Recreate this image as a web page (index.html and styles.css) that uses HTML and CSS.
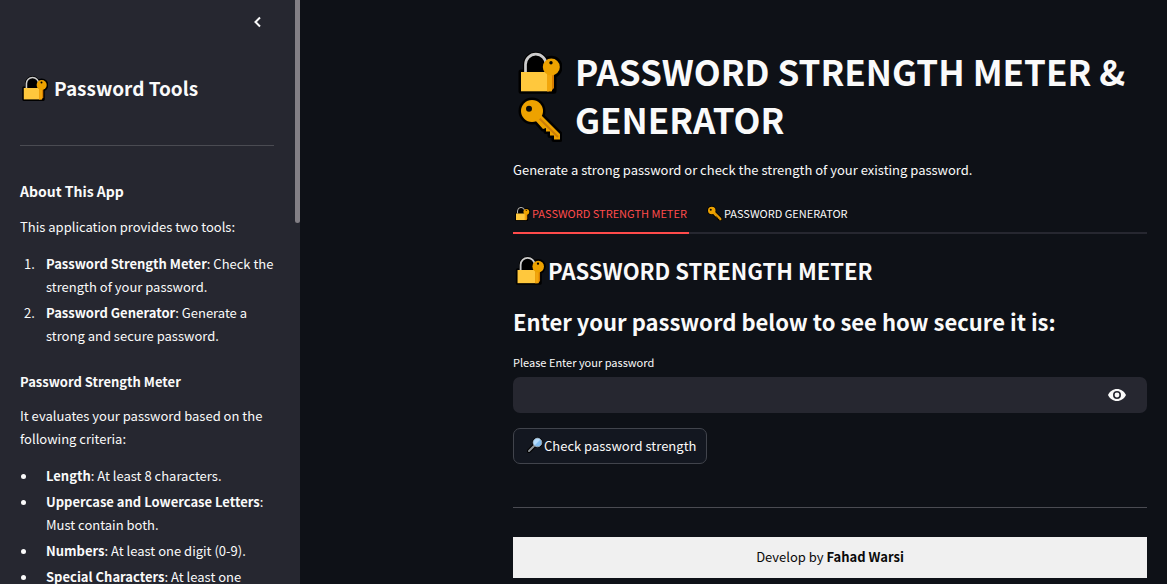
FILE: index.html
```html
<!DOCTYPE html>
<html lang="en">
<head>
<meta charset="utf-8">
<title>Password Strength Meter &amp; Generator</title>
<meta name="viewport" content="width=device-width, initial-scale=1">
<link rel="stylesheet" href="styles.css">
</head>
<body>
<svg class="sprite" aria-hidden="true">
  <symbol id="lock" viewBox="0 0 44 44">
    <path d="M7.500 22V14.500a10.300 10.300 0 0 1 20.600 0V22M3 22H36V41.300H3ZM33.300 8.300a8.700 8.700 0 1 1 0 17.400a8.700 8.700 0 1 1 0-17.400" fill="#000" stroke="#000" stroke-width="5" stroke-linejoin="round"/>
    <path d="M7.500 22V14.500a10.300 10.300 0 0 1 20.600 0V22" fill="#000" stroke="#ccc" stroke-width="2.700"/>
    <path d="M3 22H31V41.300H3Z" fill="#ffc83d"/>
    <path d="M29 23H36V38L33 41.300H29Z" fill="#d67d00"/>
    <path d="M29 23H34V41.300H29Z" fill="#f2a60c"/>
    <circle cx="33.300" cy="17" r="8.500" fill="#eda200"/>
    <circle cx="33" cy="12.700" r="1.700" fill="#000"/>
  </symbol>
  <symbol id="key" viewBox="0 0 44 44">
    <g stroke="#000" stroke-width="5" stroke-linejoin="round">
      <circle cx="14" cy="13" r="11"/>
      <path d="M17 22L23 17L42 36V41.500H36V37.500H32V33.500H28V30L25 31Z"/>
    </g>
    <path d="M17 22L23 17L42 36V41.500H36V37.500H32V33.500H28V30L25 31Z" fill="#eda200"/>
    <path d="M21 20L40 39" stroke="#cc7d08" stroke-width="2"/>
    <circle cx="14" cy="13" r="11" fill="#eda200"/>
    <circle cx="11" cy="10.700" r="3" fill="#0a0a0a"/>
  </symbol>
  <symbol id="lens" viewBox="0 0 16 16">
    <path d="M2 14L7 9" stroke="#000" stroke-width="4" stroke-linecap="round"/>
    <circle cx="10.500" cy="5.500" r="5.300" fill="#000"/>
    <path d="M2 14L7 9" stroke="#8d9296" stroke-width="2" stroke-linecap="round"/>
    <circle cx="10.500" cy="5.500" r="4.300" fill="#83bdf0" stroke="#9ba9b4" stroke-width="1"/>
    <path d="M7.800 8.200A3.800 3.800 0 0 1 13.200 2.800Z" fill="#b6dcfb"/>
  </symbol>
</svg>
<div class="app">
  <aside class="sidebar">
    <div class="sidebar-top">
      <button class="icon-button" type="button" aria-label="Collapse sidebar">
        <svg class="chevron" viewBox="0 0 12 12"><path d="M8 1.500L3.500 6L8 10.500" fill="none" stroke="#fafafa" stroke-width="2"/></svg>
      </button>
    </div>
    <h2 class="brand"><svg class="icon"><use href="#lock"/></svg>Password Tools</h2>
    <hr class="rule">
    <h3 class="section-title">About This App</h3>
    <p class="text">This application provides two tools:</p>
    <ol class="list">
      <li><strong>Password Strength Meter</strong>: Check the strength of your password.</li>
      <li><strong>Password Generator</strong>: Generate a strong and secure password.</li>
    </ol>
    <h4 class="sub-title">Password Strength Meter</h4>
    <p class="text">It evaluates your password based on the following criteria:</p>
    <ul class="list">
      <li><strong>Length</strong>: At least 8 characters.</li>
      <li><strong>Uppercase and Lowercase Letters</strong>: Must contain both.</li>
      <li><strong>Numbers</strong>: At least one digit (0-9).</li>
      <li><strong>Special Characters</strong>: At least one</li>
    </ul>
    <div class="scroll-thumb"></div>
  </aside>
  <main class="main">
    <div class="content">
      <h1 class="title">
        <span class="title-icons"><svg class="icon"><use href="#lock"/></svg><svg class="icon"><use href="#key"/></svg></span>
        <span>PASSWORD STRENGTH METER &amp; GENERATOR</span>
      </h1>
      <p class="text">Generate a strong password or check the strength of your existing password.</p>
      <div class="tabs" role="tablist">
        <button class="tab tab-active" type="button" role="tab" aria-selected="true"><svg class="icon"><use href="#lock"/></svg>PASSWORD STRENGTH METER</button>
        <button class="tab" type="button" role="tab" aria-selected="false"><svg class="icon"><use href="#key"/></svg>PASSWORD GENERATOR</button>
      </div>
      <h2 class="heading"><svg class="icon"><use href="#lock"/></svg>PASSWORD STRENGTH METER</h2>
      <h2 class="heading">Enter your password below to see how secure it is:</h2>
      <form class="form">
        <label class="label" for="password">Please Enter your password</label>
        <div class="field">
          <input class="input" id="password" type="password" autocomplete="off">
          <button class="icon-button" type="button" aria-label="Show password">
            <svg class="eye" viewBox="0 0 18 18"><path fill="#fafafa" fill-rule="evenodd" d="M9 3C5 3 1.700 5.400 0 9c1.700 3.600 5 6 9 6s7.300-2.400 9-6c-1.700-3.600-5-6-9-6Zm0 10a4 4 0 1 1 0-8a4 4 0 0 1 0 8Zm0-1.600a2.400 2.400 0 1 0 0-4.800a2.400 2.400 0 0 0 0 4.800Z"/></svg>
          </button>
        </div>
        <button class="submit" type="button"><svg class="icon"><use href="#lens"/></svg>Check password strength</button>
      </form>
      <hr class="rule">
      <footer class="footer">Develop by <strong>Fahad Warsi</strong></footer>
    </div>
  </main>
</div>
</body>
</html>
```
FILE: styles.css
```css
* { box-sizing: border-box; }
body {
  margin: 0;
  background: #0e1117;
  color: #fafafa;
  font: 13px/23px "Noto Sans CJK SC", "Noto Sans", sans-serif;
}
h1, h2, h3, h4, p, ol, ul { margin: 0; }
button, input { font: inherit; color: inherit; border: 0; background: none; padding: 0; }
.sprite { position: absolute; width: 0; height: 0; }
.icon { flex: none; display: block; }
.app { display: flex; height: 100vh; overflow: hidden; }

.sidebar {
  position: relative;
  flex: none;
  width: 300px;
  padding: 0 26px 0 20px;
  overflow: hidden;
  background: #262730;
}
.sidebar-top { display: flex; justify-content: flex-end; padding: 12px 6px 0 0; }
.icon-button { display: grid; place-items: center; width: 20px; height: 20px; cursor: pointer; }
.chevron { width: 12px; height: 12px; }
.brand {
  display: flex;
  align-items: center;
  gap: 6px;
  margin-top: 43px;
  padding-left: 2px;
  font-size: 19px;
  line-height: 26px;
  font-weight: 700;
}
.brand .icon { width: 26px; height: 26px; }
.rule { height: 1px; margin: 0; border: 0; background: #4a4b52; }
.sidebar .rule { margin: 44px 0 34px; }
.section-title { margin-bottom: 13px; font-size: 14px; line-height: 22px; font-weight: 700; }
.sub-title { margin: 26px 0 13px; font-size: 13px; line-height: 18px; }
.list { margin-top: 14px; padding-left: 26px; list-style: none; counter-reset: item; }
.list li { margin-bottom: 3px; counter-increment: item; }
.list li::before { float: left; }
ol.list li::before { content: counter(item) "."; margin-left: -22px; }
ul.list li::before {
  content: "";
  width: 5px;
  height: 5px;
  margin: 10px 0 0 -25px;
  border-radius: 50%;
  background: #fafafa;
}
.scroll-thumb {
  position: absolute;
  top: 0;
  right: 0;
  width: 5px;
  height: 223px;
  border-radius: 0 0 3px 3px;
  background: #827f85;
}

.main { flex: 1; display: flex; justify-content: flex-end; min-width: 0; padding: 47px 20px 0; }
.content { flex: 1; max-width: 634px; min-width: 0; }
.title {
  display: flex;
  gap: 13px;
  margin-bottom: 15px;
  font-size: 35px;
  line-height: 48px;
}
.title-icons { display: grid; padding: 1px 0 0 5px; height: 97px; margin-bottom: -1px; }
.title-icons .icon { width: 44px; height: 48px; }
.tabs { display: flex; gap: 16px; margin: 15px 0 21px; border-bottom: 2px solid #262730; }
.tab {
  display: flex;
  align-items: center;
  gap: 2px;
  height: 38px;
  margin-bottom: -2px;
  padding: 0 2px 2px;
  border-bottom: 2px solid transparent;
  font-size: 11px;
  cursor: pointer;
}
.tab .icon { width: 15px; height: 15px; }
.tab-active { color: #ff4b4b; border-color: #ff4b4b; }
.heading {
  display: flex;
  align-items: center;
  gap: 2px;
  margin-bottom: 21px;
  font-size: 22px;
  line-height: 30px;
  font-weight: 700;
}
.heading .icon { width: 31px; height: 30px; margin-left: 2px; }
.form { display: grid; justify-items: start; margin-bottom: 43px; }
.label { margin-top: -5px; padding-bottom: 5px; font-size: 11px; line-height: 20px; }
.field {
  display: flex;
  align-items: center;
  width: 100%;
  height: 36px;
  margin-bottom: 15px;
  padding-right: 20px;
  border-radius: 7px;
  background: #262730;
}
.input { flex: 1; min-width: 0; height: 36px; padding: 0 12px; outline: 0; }
.eye { width: 18px; height: 18px; }
.submit {
  display: flex;
  align-items: center;
  gap: 1px;
  height: 36px;
  padding: 0 10px 2px 13px;
  border: 1px solid #41444c;
  border-radius: 7px;
  background: #131720;
  cursor: pointer;
}
.submit .icon { width: 16px; height: 16px; }
.footer { margin-top: 29px; padding: 8px 9px 10px; background: #f0f0f0; color: #0a0a0a; text-align: center; }
```
